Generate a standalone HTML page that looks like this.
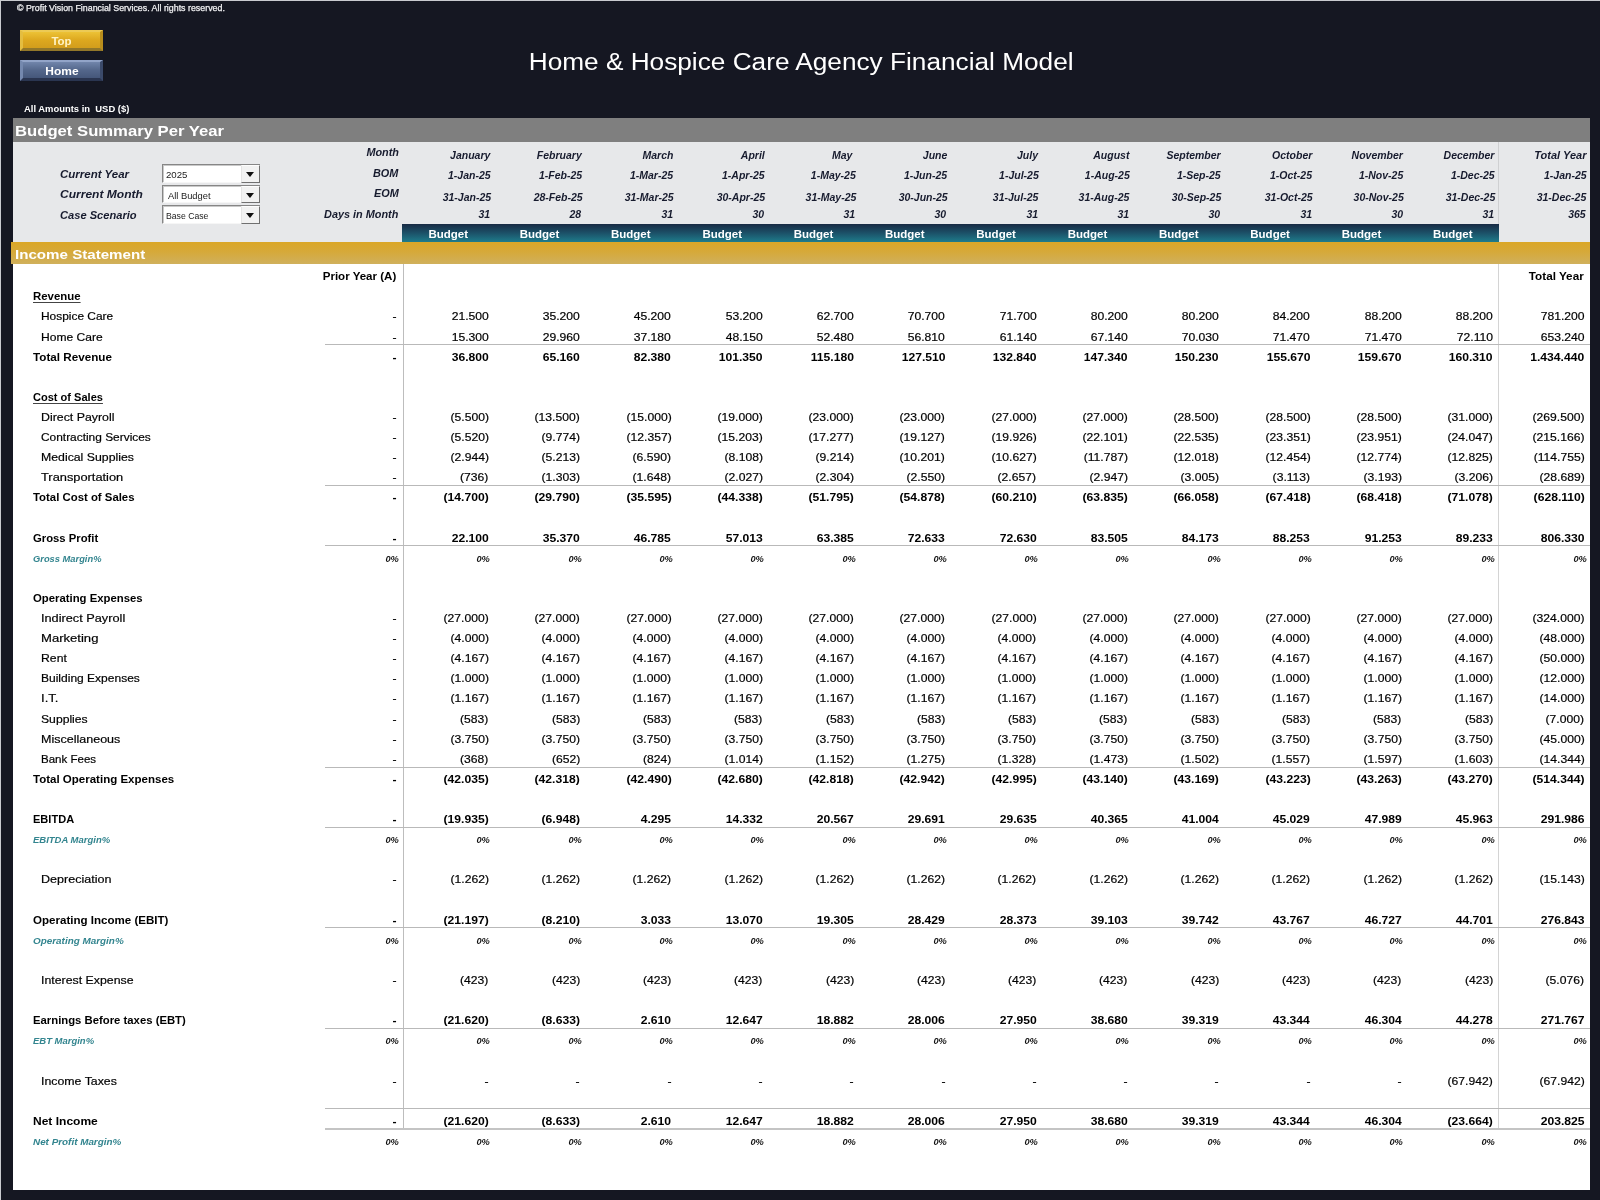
<!DOCTYPE html>
<html lang="en">
<head>
<meta charset="utf-8">
<title>Home &amp; Hospice Care Agency Financial Model</title>
<style>
*{box-sizing:border-box;margin:0;padding:0}
html,body{width:1600px;height:1200px;overflow:hidden;background:#151722}
body{font-family:"Liberation Sans",sans-serif;color:#000}
#page{will-change:transform;position:relative;width:1600px;height:1200px;overflow:hidden;background:#151722}
#page span,#page div{white-space:nowrap}
.edge{position:absolute;left:0;top:0;width:1px;height:1200px;background:#c9cacf}
.edget{position:absolute;left:0;top:0;width:1600px;height:1px;background:#c9cacf}
.copy{position:absolute;left:17px;top:2.8px;-webkit-text-stroke:0.25px #f0f0f2;font-size:8.2px;line-height:11px;color:#f0f0f2;font-weight:normal;transform:scaleX(1.08);transform-origin:0 50%}
.btn{position:absolute;left:20px;width:83px;height:21px;color:#fff;font-weight:bold;font-size:11.5px;line-height:20px;text-align:center;border-style:solid;border-width:2px 3px 3px 3px}
.btn.top{top:30px;background:linear-gradient(#ecc236,#dda81f 50%,#d29d1c);border-color:#ecca55 #b88d1c #927729 #e4bd40;color:#fff3c4}
.btn.home{top:60px;height:20.8px;background:linear-gradient(#7185ab,#54678b 50%,#45577a);border-color:#92a4c8 #3b4a6a #2a3550 #7488ae}
.btn.home span{transform:scaleX(1.04)}
.btn span{display:inline-block;position:relative;top:-1px}
.title{position:absolute;left:1.5px;width:1600px;top:45.4px;text-align:center;color:#fff;font-size:23.3px;line-height:34px}
.title span{display:inline-block;transform:scaleX(1.125)}
.amounts{position:absolute;left:24px;top:101.7px;font-size:9px;line-height:14px;color:#fff;font-weight:bold;transform:scaleX(1.046);transform-origin:0 50%}
.ghead{position:absolute;left:13px;top:118px;width:1577px;height:24px;background:#7f7f7f;color:#fff;font-weight:bold;font-size:15.5px;line-height:26px;padding-left:2px}
.ghead span{display:inline-block;transform:scaleX(1.075);transform-origin:0 50%}
.panel{position:absolute;left:13px;top:142px;width:1577px;height:100px;background:#e7e8ea}
.pline{position:absolute;left:1498px;top:142px;width:1px;height:100px;background:#cfd0d2}
.h{position:absolute;margin-top:0.8px;font-size:10px;line-height:14.4px;font-weight:bold;font-style:italic;color:#171b2e;transform:scaleX(1.05);transform-origin:100% 50%}
.h.hq{transform:scaleX(1.087)}
.h.ty{transform:scaleX(1.10)}
.pl{position:absolute;left:60px;font-size:11.5px;line-height:16px;font-weight:bold;font-style:italic;color:#171b2e;transform:scaleX(1.015);transform-origin:0 50%}
.dd{position:absolute;left:162px;width:98px;height:18.5px;background:#fff;border-top:1px solid #868686;border-left:1px solid #868686;border-bottom:1px solid #f6f6f6;box-shadow:inset 1px 1px 0 #c9c9c9}
.dd .v{position:absolute;left:3px;top:4px;font-size:9.4px;line-height:12px;color:#222;transform:scaleX(1.03);transform-origin:0 50%}
.dd .a{position:absolute;right:0;top:0;width:19px;height:17.5px;background:#f2f2f2;border:1px solid;border-color:#fdfdfd #707070 #707070 #e4e4e4}
.dd .a:after{content:"";position:absolute;left:3.5px;top:6px;border-left:4.7px solid transparent;border-right:4.7px solid transparent;border-top:5px solid #111}
.budbar{position:absolute;left:402px;top:224px;width:1096.5px;height:18px;background:linear-gradient(#182a44,#1c5168 50%,#1e7c8b)}
.bud{position:absolute;top:0;width:90px;text-align:center;color:#fff;font-weight:bold;font-size:11.5px;line-height:20.6px}
.gold{position:absolute;left:11px;top:242px;width:1579px;height:21.5px;background:linear-gradient(#dba727,#d6a93a 45%,#d0b05c);color:#fff;font-weight:bold;font-size:13.5px;line-height:25.6px;padding-left:4px}
.gold span{display:inline-block;transform:scaleX(1.12);transform-origin:0 50%}
.sheet{position:absolute;left:13px;top:263.5px;width:1577px;height:926px;background:#fff}
.vl{position:absolute;width:1px;top:264px;height:864px}
.hl{position:absolute;left:325px;width:1265px}
.row{position:absolute;left:0;width:1600px;height:20.1px}
.row span{position:absolute;top:7px;font-size:10.4px;line-height:14px;color:#000;-webkit-text-stroke:0.18px #000}
.row .lab{transform:scaleX(1.15);transform-origin:0 50%}
.row .lab.b{transform:scaleX(1.116)}
.row .n{transform:scaleX(1.168);transform-origin:100% 50%}
.row .b{font-weight:bold;color:#000;-webkit-text-stroke:0}
.row .u{text-decoration:underline;text-underline-offset:1.5px;text-decoration-thickness:1px;text-decoration-color:#444}
.row .lab.m{font-size:8.4px;font-weight:bold;font-style:italic;color:#33858f;-webkit-text-stroke:0;top:7px;transform:scaleX(1.155)}
.row .n.p{font-size:8.2px;font-weight:bold;font-style:italic;color:#111;-webkit-text-stroke:0;top:7.8px;transform:scaleX(1.13)}
</style>
</head>
<body>
<div id="page">
<div class="edge"></div>
<div class="edget"></div>
<div class="copy">© Profit Vision Financial Services. All rights reserved.</div>
<div class="btn top"><span>Top</span></div>
<div class="btn home"><span>Home</span></div>
<div class="title"><span>Home &amp; Hospice Care Agency Financial Model</span></div>
<div class="amounts">All Amounts in&nbsp; USD ($)</div>
<div class="ghead"><span>Budget Summary Per Year</span></div>
<div class="panel"></div>
<div class="pline"></div>
<span class="pl" style="top:165.5px;transform:scaleX(1.0)">Current Year</span>
<span class="pl" style="top:186.3px;transform:scaleX(1.047)">Current Month</span>
<span class="pl" style="top:206.8px;transform:scaleX(0.967)">Case Scenario</span>
<div class="dd" style="top:164px"><span class="v">2025</span><span class="a"></span></div>
<div class="dd" style="top:184.5px"><span class="v" style="left:5px;transform:scaleX(0.995)">All Budget</span><span class="a"></span></div>
<div class="dd" style="top:205px"><span class="v" style="left:2.5px;transform:scaleX(0.925)">Base Case</span><span class="a"></span></div>
<span class="h" style="right:1109.4px;top:148.4px">January</span>
<span class="h" style="right:1109.1px;top:168.0px">1-Jan-25</span>
<span class="h" style="right:1109.1px;top:190.0px">31-Jan-25</span>
<span class="h" style="right:1109.7px;top:207.0px">31</span>
<span class="h" style="right:1018.1px;top:148.4px">February</span>
<span class="h" style="right:1017.8px;top:168.0px">1-Feb-25</span>
<span class="h" style="right:1017.8px;top:190.0px">28-Feb-25</span>
<span class="h" style="right:1018.4px;top:207.0px">28</span>
<span class="h" style="right:926.9px;top:148.4px">March</span>
<span class="h" style="right:926.6px;top:168.0px">1-Mar-25</span>
<span class="h" style="right:926.6px;top:190.0px">31-Mar-25</span>
<span class="h" style="right:927.2px;top:207.0px">31</span>
<span class="h" style="right:835.6px;top:148.4px">April</span>
<span class="h" style="right:835.3px;top:168.0px">1-Apr-25</span>
<span class="h" style="right:835.3px;top:190.0px">30-Apr-25</span>
<span class="h" style="right:835.9px;top:207.0px">30</span>
<span class="h" style="right:747.3px;top:148.4px">May</span>
<span class="h" style="right:744.0px;top:168.0px">1-May-25</span>
<span class="h" style="right:744.0px;top:190.0px">31-May-25</span>
<span class="h" style="right:744.6px;top:207.0px">31</span>
<span class="h" style="right:653.0px;top:148.4px">June</span>
<span class="h" style="right:652.8px;top:168.0px">1-Jun-25</span>
<span class="h" style="right:652.8px;top:190.0px">30-Jun-25</span>
<span class="h" style="right:653.4px;top:207.0px">30</span>
<span class="h" style="right:561.8px;top:148.4px">July</span>
<span class="h" style="right:561.5px;top:168.0px">1-Jul-25</span>
<span class="h" style="right:561.5px;top:190.0px">31-Jul-25</span>
<span class="h" style="right:562.1px;top:207.0px">31</span>
<span class="h" style="right:470.5px;top:148.4px">August</span>
<span class="h" style="right:470.2px;top:168.0px">1-Aug-25</span>
<span class="h" style="right:470.2px;top:190.0px">31-Aug-25</span>
<span class="h" style="right:470.8px;top:207.0px">31</span>
<span class="h" style="right:379.2px;top:148.4px">September</span>
<span class="h" style="right:378.9px;top:168.0px">1-Sep-25</span>
<span class="h" style="right:378.9px;top:190.0px">30-Sep-25</span>
<span class="h" style="right:379.5px;top:207.0px">30</span>
<span class="h" style="right:288.0px;top:148.4px">October</span>
<span class="h" style="right:287.7px;top:168.0px">1-Oct-25</span>
<span class="h" style="right:287.7px;top:190.0px">31-Oct-25</span>
<span class="h" style="right:288.3px;top:207.0px">31</span>
<span class="h" style="right:196.7px;top:148.4px">November</span>
<span class="h" style="right:196.4px;top:168.0px">1-Nov-25</span>
<span class="h" style="right:196.4px;top:190.0px">30-Nov-25</span>
<span class="h" style="right:197.0px;top:207.0px">30</span>
<span class="h" style="right:105.4px;top:148.4px">December</span>
<span class="h" style="right:105.1px;top:168.0px">1-Dec-25</span>
<span class="h" style="right:105.1px;top:190.0px">31-Dec-25</span>
<span class="h" style="right:105.7px;top:207.0px">31</span>
<span class="h ty" style="right:13.7px;top:148.4px">Total Year</span>
<span class="h" style="right:13.7px;top:168.0px">1-Jan-25</span>
<span class="h" style="right:13.7px;top:190.0px">31-Dec-25</span>
<span class="h" style="right:14.0px;top:207.0px">365</span>
<span class="h hq" style="right:1201.3px;top:145.4px">Month</span>
<span class="h hq" style="right:1201.3px;top:166.0px">BOM</span>
<span class="h hq" style="right:1201.3px;top:186.0px">EOM</span>
<span class="h hq" style="right:1201.3px;top:207.0px">Days in Month</span>
<div class="budbar">
</div>
<div class="budwrap" style="position:absolute;left:0;top:224px;width:1600px;height:18px">
<span class="bud" style="left:403.2px">Budget</span>
<span class="bud" style="left:494.5px">Budget</span>
<span class="bud" style="left:585.8px">Budget</span>
<span class="bud" style="left:677.2px">Budget</span>
<span class="bud" style="left:768.5px">Budget</span>
<span class="bud" style="left:859.8px">Budget</span>
<span class="bud" style="left:951.1px">Budget</span>
<span class="bud" style="left:1042.5px">Budget</span>
<span class="bud" style="left:1133.8px">Budget</span>
<span class="bud" style="left:1225.1px">Budget</span>
<span class="bud" style="left:1316.5px">Budget</span>
<span class="bud" style="left:1407.8px">Budget</span>
</div>
<div class="gold"><span>Income Statement</span></div>
<div class="sheet"></div>
<div class="vl" style="left:403px;background:#bdbdbd"></div>
<div class="vl" style="left:1498px;background:#d4d4d4"></div>
<div class="row hdr0" style="top:263px">
<span class="n b" style="right:1203.5px;transform:scaleX(1.11)">Prior Year (A)</span>
<span class="n b" style="right:16.0px;transform:scaleX(1.127)">Total Year</span>
</div>
<div class="row uhead" style="top:283px">
<span class="lab b u" style="left:33.0px;transform:scaleX(1.0986)">Revenue</span>
</div>
<div class="row item" style="top:303px">
<span class="lab" style="left:41.1px;transform:scaleX(1.1468)">Hospice Care</span>
<span class="n" style="right:1203.7px">-</span>
<span class="n" style="right:1111.4px">21.500</span>
<span class="n" style="right:1020.1px">35.200</span>
<span class="n" style="right:928.8px">45.200</span>
<span class="n" style="right:837.5px">53.200</span>
<span class="n" style="right:746.2px">62.700</span>
<span class="n" style="right:654.9px">70.700</span>
<span class="n" style="right:563.7px">71.700</span>
<span class="n" style="right:472.4px">80.200</span>
<span class="n" style="right:381.1px">80.200</span>
<span class="n" style="right:289.8px">84.200</span>
<span class="n" style="right:198.5px">88.200</span>
<span class="n" style="right:107.2px">88.200</span>
<span class="n" style="right:15.6px">781.200</span>
</div>
<div class="row item" style="top:324px">
<span class="lab" style="left:41.1px;transform:scaleX(1.1605)">Home Care</span>
<span class="n" style="right:1203.7px">-</span>
<span class="n" style="right:1111.4px">15.300</span>
<span class="n" style="right:1020.1px">29.960</span>
<span class="n" style="right:928.8px">37.180</span>
<span class="n" style="right:837.5px">48.150</span>
<span class="n" style="right:746.2px">52.480</span>
<span class="n" style="right:654.9px">56.810</span>
<span class="n" style="right:563.7px">61.140</span>
<span class="n" style="right:472.4px">67.140</span>
<span class="n" style="right:381.1px">70.030</span>
<span class="n" style="right:289.8px">71.470</span>
<span class="n" style="right:198.5px">71.470</span>
<span class="n" style="right:107.2px">72.110</span>
<span class="n" style="right:15.6px">653.240</span>
</div>
<div class="row total" style="top:344px">
<span class="lab b" style="left:33.0px;transform:scaleX(1.1232)">Total Revenue</span>
<span class="n b" style="right:1203.7px">-</span>
<span class="n b" style="right:1111.4px">36.800</span>
<span class="n b" style="right:1020.1px">65.160</span>
<span class="n b" style="right:928.8px">82.380</span>
<span class="n b" style="right:837.5px">101.350</span>
<span class="n b" style="right:746.2px">115.180</span>
<span class="n b" style="right:654.9px">127.510</span>
<span class="n b" style="right:563.7px">132.840</span>
<span class="n b" style="right:472.4px">147.340</span>
<span class="n b" style="right:381.1px">150.230</span>
<span class="n b" style="right:289.8px">155.670</span>
<span class="n b" style="right:198.5px">159.670</span>
<span class="n b" style="right:107.2px">160.310</span>
<span class="n b" style="right:15.6px">1.434.440</span>
</div>
<div class="row uhead" style="top:384px">
<span class="lab b u" style="left:33.0px;transform:scaleX(1.0625)">Cost of Sales</span>
</div>
<div class="row item" style="top:404px">
<span class="lab" style="left:41.1px;transform:scaleX(1.1878)">Direct Payroll</span>
<span class="n" style="right:1203.7px">-</span>
<span class="n" style="right:1111.4px">(5.500)</span>
<span class="n" style="right:1020.1px">(13.500)</span>
<span class="n" style="right:928.8px">(15.000)</span>
<span class="n" style="right:837.5px">(19.000)</span>
<span class="n" style="right:746.2px">(23.000)</span>
<span class="n" style="right:654.9px">(23.000)</span>
<span class="n" style="right:563.7px">(27.000)</span>
<span class="n" style="right:472.4px">(27.000)</span>
<span class="n" style="right:381.1px">(28.500)</span>
<span class="n" style="right:289.8px">(28.500)</span>
<span class="n" style="right:198.5px">(28.500)</span>
<span class="n" style="right:107.2px">(31.000)</span>
<span class="n" style="right:15.6px">(269.500)</span>
</div>
<div class="row item" style="top:424px">
<span class="lab" style="left:41.1px;transform:scaleX(1.1453)">Contracting Services</span>
<span class="n" style="right:1203.7px">-</span>
<span class="n" style="right:1111.4px">(5.520)</span>
<span class="n" style="right:1020.1px">(9.774)</span>
<span class="n" style="right:928.8px">(12.357)</span>
<span class="n" style="right:837.5px">(15.203)</span>
<span class="n" style="right:746.2px">(17.277)</span>
<span class="n" style="right:654.9px">(19.127)</span>
<span class="n" style="right:563.7px">(19.926)</span>
<span class="n" style="right:472.4px">(22.101)</span>
<span class="n" style="right:381.1px">(22.535)</span>
<span class="n" style="right:289.8px">(23.351)</span>
<span class="n" style="right:198.5px">(23.951)</span>
<span class="n" style="right:107.2px">(24.047)</span>
<span class="n" style="right:15.6px">(215.166)</span>
</div>
<div class="row item" style="top:444px">
<span class="lab" style="left:41.1px;transform:scaleX(1.1829)">Medical Supplies</span>
<span class="n" style="right:1203.7px">-</span>
<span class="n" style="right:1111.4px">(2.944)</span>
<span class="n" style="right:1020.1px">(5.213)</span>
<span class="n" style="right:928.8px">(6.590)</span>
<span class="n" style="right:837.5px">(8.108)</span>
<span class="n" style="right:746.2px">(9.214)</span>
<span class="n" style="right:654.9px">(10.201)</span>
<span class="n" style="right:563.7px">(10.627)</span>
<span class="n" style="right:472.4px">(11.787)</span>
<span class="n" style="right:381.1px">(12.018)</span>
<span class="n" style="right:289.8px">(12.454)</span>
<span class="n" style="right:198.5px">(12.774)</span>
<span class="n" style="right:107.2px">(12.825)</span>
<span class="n" style="right:15.6px">(114.755)</span>
</div>
<div class="row item" style="top:464px">
<span class="lab" style="left:41.1px;transform:scaleX(1.2340)">Transportation</span>
<span class="n" style="right:1203.7px">-</span>
<span class="n" style="right:1111.4px">(736)</span>
<span class="n" style="right:1020.1px">(1.303)</span>
<span class="n" style="right:928.8px">(1.648)</span>
<span class="n" style="right:837.5px">(2.027)</span>
<span class="n" style="right:746.2px">(2.304)</span>
<span class="n" style="right:654.9px">(2.550)</span>
<span class="n" style="right:563.7px">(2.657)</span>
<span class="n" style="right:472.4px">(2.947)</span>
<span class="n" style="right:381.1px">(3.005)</span>
<span class="n" style="right:289.8px">(3.113)</span>
<span class="n" style="right:198.5px">(3.193)</span>
<span class="n" style="right:107.2px">(3.206)</span>
<span class="n" style="right:15.6px">(28.689)</span>
</div>
<div class="row total" style="top:484px">
<span class="lab b" style="left:33.0px;transform:scaleX(1.0943)">Total Cost of Sales</span>
<span class="n b" style="right:1203.7px">-</span>
<span class="n b" style="right:1111.4px">(14.700)</span>
<span class="n b" style="right:1020.1px">(29.790)</span>
<span class="n b" style="right:928.8px">(35.595)</span>
<span class="n b" style="right:837.5px">(44.338)</span>
<span class="n b" style="right:746.2px">(51.795)</span>
<span class="n b" style="right:654.9px">(54.878)</span>
<span class="n b" style="right:563.7px">(60.210)</span>
<span class="n b" style="right:472.4px">(63.835)</span>
<span class="n b" style="right:381.1px">(66.058)</span>
<span class="n b" style="right:289.8px">(67.418)</span>
<span class="n b" style="right:198.5px">(68.418)</span>
<span class="n b" style="right:107.2px">(71.078)</span>
<span class="n b" style="right:15.6px">(628.110)</span>
</div>
<div class="row total" style="top:525px">
<span class="lab b" style="left:33.0px;transform:scaleX(1.0869)">Gross Profit</span>
<span class="n b" style="right:1203.7px">-</span>
<span class="n b" style="right:1111.4px">22.100</span>
<span class="n b" style="right:1020.1px">35.370</span>
<span class="n b" style="right:928.8px">46.785</span>
<span class="n b" style="right:837.5px">57.013</span>
<span class="n b" style="right:746.2px">63.385</span>
<span class="n b" style="right:654.9px">72.633</span>
<span class="n b" style="right:563.7px">72.630</span>
<span class="n b" style="right:472.4px">83.505</span>
<span class="n b" style="right:381.1px">84.173</span>
<span class="n b" style="right:289.8px">88.253</span>
<span class="n b" style="right:198.5px">91.253</span>
<span class="n b" style="right:107.2px">89.233</span>
<span class="n b" style="right:15.6px">806.330</span>
</div>
<div class="row margin" style="top:545px">
<span class="lab m" style="left:33.0px;transform:scaleX(1.1143)">Gross Margin%</span>
<span class="n p" style="right:1201.0px">0%</span>
<span class="n p" style="right:1110.0px">0%</span>
<span class="n p" style="right:1018.6px">0%</span>
<span class="n p" style="right:927.3px">0%</span>
<span class="n p" style="right:836.0px">0%</span>
<span class="n p" style="right:744.6px">0%</span>
<span class="n p" style="right:653.3px">0%</span>
<span class="n p" style="right:562.0px">0%</span>
<span class="n p" style="right:470.7px">0%</span>
<span class="n p" style="right:379.3px">0%</span>
<span class="n p" style="right:288.0px">0%</span>
<span class="n p" style="right:196.7px">0%</span>
<span class="n p" style="right:105.3px">0%</span>
<span class="n p" style="right:13.5px">0%</span>
</div>
<div class="row head" style="top:585px">
<span class="lab b" style="left:33.0px;transform:scaleX(1.0911)">Operating Expenses</span>
</div>
<div class="row item" style="top:605px">
<span class="lab" style="left:41.1px;transform:scaleX(1.2254)">Indirect Payroll</span>
<span class="n" style="right:1203.7px">-</span>
<span class="n" style="right:1111.4px">(27.000)</span>
<span class="n" style="right:1020.1px">(27.000)</span>
<span class="n" style="right:928.8px">(27.000)</span>
<span class="n" style="right:837.5px">(27.000)</span>
<span class="n" style="right:746.2px">(27.000)</span>
<span class="n" style="right:654.9px">(27.000)</span>
<span class="n" style="right:563.7px">(27.000)</span>
<span class="n" style="right:472.4px">(27.000)</span>
<span class="n" style="right:381.1px">(27.000)</span>
<span class="n" style="right:289.8px">(27.000)</span>
<span class="n" style="right:198.5px">(27.000)</span>
<span class="n" style="right:107.2px">(27.000)</span>
<span class="n" style="right:15.6px">(324.000)</span>
</div>
<div class="row item" style="top:625px">
<span class="lab" style="left:41.1px;transform:scaleX(1.2582)">Marketing</span>
<span class="n" style="right:1203.7px">-</span>
<span class="n" style="right:1111.4px">(4.000)</span>
<span class="n" style="right:1020.1px">(4.000)</span>
<span class="n" style="right:928.8px">(4.000)</span>
<span class="n" style="right:837.5px">(4.000)</span>
<span class="n" style="right:746.2px">(4.000)</span>
<span class="n" style="right:654.9px">(4.000)</span>
<span class="n" style="right:563.7px">(4.000)</span>
<span class="n" style="right:472.4px">(4.000)</span>
<span class="n" style="right:381.1px">(4.000)</span>
<span class="n" style="right:289.8px">(4.000)</span>
<span class="n" style="right:198.5px">(4.000)</span>
<span class="n" style="right:107.2px">(4.000)</span>
<span class="n" style="right:15.6px">(48.000)</span>
</div>
<div class="row item" style="top:645px">
<span class="lab" style="left:41.1px;transform:scaleX(1.1764)">Rent</span>
<span class="n" style="right:1203.7px">-</span>
<span class="n" style="right:1111.4px">(4.167)</span>
<span class="n" style="right:1020.1px">(4.167)</span>
<span class="n" style="right:928.8px">(4.167)</span>
<span class="n" style="right:837.5px">(4.167)</span>
<span class="n" style="right:746.2px">(4.167)</span>
<span class="n" style="right:654.9px">(4.167)</span>
<span class="n" style="right:563.7px">(4.167)</span>
<span class="n" style="right:472.4px">(4.167)</span>
<span class="n" style="right:381.1px">(4.167)</span>
<span class="n" style="right:289.8px">(4.167)</span>
<span class="n" style="right:198.5px">(4.167)</span>
<span class="n" style="right:107.2px">(4.167)</span>
<span class="n" style="right:15.6px">(50.000)</span>
</div>
<div class="row item" style="top:665px">
<span class="lab" style="left:41.1px;transform:scaleX(1.1565)">Building Expenses</span>
<span class="n" style="right:1203.7px">-</span>
<span class="n" style="right:1111.4px">(1.000)</span>
<span class="n" style="right:1020.1px">(1.000)</span>
<span class="n" style="right:928.8px">(1.000)</span>
<span class="n" style="right:837.5px">(1.000)</span>
<span class="n" style="right:746.2px">(1.000)</span>
<span class="n" style="right:654.9px">(1.000)</span>
<span class="n" style="right:563.7px">(1.000)</span>
<span class="n" style="right:472.4px">(1.000)</span>
<span class="n" style="right:381.1px">(1.000)</span>
<span class="n" style="right:289.8px">(1.000)</span>
<span class="n" style="right:198.5px">(1.000)</span>
<span class="n" style="right:107.2px">(1.000)</span>
<span class="n" style="right:15.6px">(12.000)</span>
</div>
<div class="row item" style="top:685px">
<span class="lab" style="left:41.1px;transform:scaleX(1.2600)">I.T.</span>
<span class="n" style="right:1203.7px">-</span>
<span class="n" style="right:1111.4px">(1.167)</span>
<span class="n" style="right:1020.1px">(1.167)</span>
<span class="n" style="right:928.8px">(1.167)</span>
<span class="n" style="right:837.5px">(1.167)</span>
<span class="n" style="right:746.2px">(1.167)</span>
<span class="n" style="right:654.9px">(1.167)</span>
<span class="n" style="right:563.7px">(1.167)</span>
<span class="n" style="right:472.4px">(1.167)</span>
<span class="n" style="right:381.1px">(1.167)</span>
<span class="n" style="right:289.8px">(1.167)</span>
<span class="n" style="right:198.5px">(1.167)</span>
<span class="n" style="right:107.2px">(1.167)</span>
<span class="n" style="right:15.6px">(14.000)</span>
</div>
<div class="row item" style="top:706px">
<span class="lab" style="left:41.1px;transform:scaleX(1.1709)">Supplies</span>
<span class="n" style="right:1203.7px">-</span>
<span class="n" style="right:1111.4px">(583)</span>
<span class="n" style="right:1020.1px">(583)</span>
<span class="n" style="right:928.8px">(583)</span>
<span class="n" style="right:837.5px">(583)</span>
<span class="n" style="right:746.2px">(583)</span>
<span class="n" style="right:654.9px">(583)</span>
<span class="n" style="right:563.7px">(583)</span>
<span class="n" style="right:472.4px">(583)</span>
<span class="n" style="right:381.1px">(583)</span>
<span class="n" style="right:289.8px">(583)</span>
<span class="n" style="right:198.5px">(583)</span>
<span class="n" style="right:107.2px">(583)</span>
<span class="n" style="right:15.6px">(7.000)</span>
</div>
<div class="row item" style="top:726px">
<span class="lab" style="left:41.1px;transform:scaleX(1.2052)">Miscellaneous</span>
<span class="n" style="right:1203.7px">-</span>
<span class="n" style="right:1111.4px">(3.750)</span>
<span class="n" style="right:1020.1px">(3.750)</span>
<span class="n" style="right:928.8px">(3.750)</span>
<span class="n" style="right:837.5px">(3.750)</span>
<span class="n" style="right:746.2px">(3.750)</span>
<span class="n" style="right:654.9px">(3.750)</span>
<span class="n" style="right:563.7px">(3.750)</span>
<span class="n" style="right:472.4px">(3.750)</span>
<span class="n" style="right:381.1px">(3.750)</span>
<span class="n" style="right:289.8px">(3.750)</span>
<span class="n" style="right:198.5px">(3.750)</span>
<span class="n" style="right:107.2px">(3.750)</span>
<span class="n" style="right:15.6px">(45.000)</span>
</div>
<div class="row item" style="top:746px">
<span class="lab" style="left:41.1px;transform:scaleX(1.1100)">Bank Fees</span>
<span class="n" style="right:1203.7px">-</span>
<span class="n" style="right:1111.4px">(368)</span>
<span class="n" style="right:1020.1px">(652)</span>
<span class="n" style="right:928.8px">(824)</span>
<span class="n" style="right:837.5px">(1.014)</span>
<span class="n" style="right:746.2px">(1.152)</span>
<span class="n" style="right:654.9px">(1.275)</span>
<span class="n" style="right:563.7px">(1.328)</span>
<span class="n" style="right:472.4px">(1.473)</span>
<span class="n" style="right:381.1px">(1.502)</span>
<span class="n" style="right:289.8px">(1.557)</span>
<span class="n" style="right:198.5px">(1.597)</span>
<span class="n" style="right:107.2px">(1.603)</span>
<span class="n" style="right:15.6px">(14.344)</span>
</div>
<div class="row total" style="top:766px">
<span class="lab b" style="left:33.0px;transform:scaleX(1.1081)">Total Operating Expenses</span>
<span class="n b" style="right:1203.7px">-</span>
<span class="n b" style="right:1111.4px">(42.035)</span>
<span class="n b" style="right:1020.1px">(42.318)</span>
<span class="n b" style="right:928.8px">(42.490)</span>
<span class="n b" style="right:837.5px">(42.680)</span>
<span class="n b" style="right:746.2px">(42.818)</span>
<span class="n b" style="right:654.9px">(42.942)</span>
<span class="n b" style="right:563.7px">(42.995)</span>
<span class="n b" style="right:472.4px">(43.140)</span>
<span class="n b" style="right:381.1px">(43.169)</span>
<span class="n b" style="right:289.8px">(43.223)</span>
<span class="n b" style="right:198.5px">(43.263)</span>
<span class="n b" style="right:107.2px">(43.270)</span>
<span class="n b" style="right:15.6px">(514.344)</span>
</div>
<div class="row total" style="top:806px">
<span class="lab b" style="left:33.0px;transform:scaleX(1.0629)">EBITDA</span>
<span class="n b" style="right:1203.7px">-</span>
<span class="n b" style="right:1111.4px">(19.935)</span>
<span class="n b" style="right:1020.1px">(6.948)</span>
<span class="n b" style="right:928.8px">4.295</span>
<span class="n b" style="right:837.5px">14.332</span>
<span class="n b" style="right:746.2px">20.567</span>
<span class="n b" style="right:654.9px">29.691</span>
<span class="n b" style="right:563.7px">29.635</span>
<span class="n b" style="right:472.4px">40.365</span>
<span class="n b" style="right:381.1px">41.004</span>
<span class="n b" style="right:289.8px">45.029</span>
<span class="n b" style="right:198.5px">47.989</span>
<span class="n b" style="right:107.2px">45.963</span>
<span class="n b" style="right:15.6px">291.986</span>
</div>
<div class="row margin" style="top:826px">
<span class="lab m" style="left:33.0px;transform:scaleX(1.1328)">EBITDA Margin%</span>
<span class="n p" style="right:1201.0px">0%</span>
<span class="n p" style="right:1110.0px">0%</span>
<span class="n p" style="right:1018.6px">0%</span>
<span class="n p" style="right:927.3px">0%</span>
<span class="n p" style="right:836.0px">0%</span>
<span class="n p" style="right:744.6px">0%</span>
<span class="n p" style="right:653.3px">0%</span>
<span class="n p" style="right:562.0px">0%</span>
<span class="n p" style="right:470.7px">0%</span>
<span class="n p" style="right:379.3px">0%</span>
<span class="n p" style="right:288.0px">0%</span>
<span class="n p" style="right:196.7px">0%</span>
<span class="n p" style="right:105.3px">0%</span>
<span class="n p" style="right:13.5px">0%</span>
</div>
<div class="row item" style="top:866px">
<span class="lab" style="left:41.1px;transform:scaleX(1.2075)">Depreciation</span>
<span class="n" style="right:1203.7px">-</span>
<span class="n" style="right:1111.4px">(1.262)</span>
<span class="n" style="right:1020.1px">(1.262)</span>
<span class="n" style="right:928.8px">(1.262)</span>
<span class="n" style="right:837.5px">(1.262)</span>
<span class="n" style="right:746.2px">(1.262)</span>
<span class="n" style="right:654.9px">(1.262)</span>
<span class="n" style="right:563.7px">(1.262)</span>
<span class="n" style="right:472.4px">(1.262)</span>
<span class="n" style="right:381.1px">(1.262)</span>
<span class="n" style="right:289.8px">(1.262)</span>
<span class="n" style="right:198.5px">(1.262)</span>
<span class="n" style="right:107.2px">(1.262)</span>
<span class="n" style="right:15.6px">(15.143)</span>
</div>
<div class="row total" style="top:907px">
<span class="lab b" style="left:33.0px;transform:scaleX(1.1119)">Operating Income (EBIT)</span>
<span class="n b" style="right:1203.7px">-</span>
<span class="n b" style="right:1111.4px">(21.197)</span>
<span class="n b" style="right:1020.1px">(8.210)</span>
<span class="n b" style="right:928.8px">3.033</span>
<span class="n b" style="right:837.5px">13.070</span>
<span class="n b" style="right:746.2px">19.305</span>
<span class="n b" style="right:654.9px">28.429</span>
<span class="n b" style="right:563.7px">28.373</span>
<span class="n b" style="right:472.4px">39.103</span>
<span class="n b" style="right:381.1px">39.742</span>
<span class="n b" style="right:289.8px">43.767</span>
<span class="n b" style="right:198.5px">46.727</span>
<span class="n b" style="right:107.2px">44.701</span>
<span class="n b" style="right:15.6px">276.843</span>
</div>
<div class="row margin" style="top:927px">
<span class="lab m" style="left:33.0px;transform:scaleX(1.1813)">Operating Margin%</span>
<span class="n p" style="right:1201.0px">0%</span>
<span class="n p" style="right:1110.0px">0%</span>
<span class="n p" style="right:1018.6px">0%</span>
<span class="n p" style="right:927.3px">0%</span>
<span class="n p" style="right:836.0px">0%</span>
<span class="n p" style="right:744.6px">0%</span>
<span class="n p" style="right:653.3px">0%</span>
<span class="n p" style="right:562.0px">0%</span>
<span class="n p" style="right:470.7px">0%</span>
<span class="n p" style="right:379.3px">0%</span>
<span class="n p" style="right:288.0px">0%</span>
<span class="n p" style="right:196.7px">0%</span>
<span class="n p" style="right:105.3px">0%</span>
<span class="n p" style="right:13.5px">0%</span>
</div>
<div class="row item" style="top:967px">
<span class="lab" style="left:41.1px;transform:scaleX(1.1866)">Interest Expense</span>
<span class="n" style="right:1203.7px">-</span>
<span class="n" style="right:1111.4px">(423)</span>
<span class="n" style="right:1020.1px">(423)</span>
<span class="n" style="right:928.8px">(423)</span>
<span class="n" style="right:837.5px">(423)</span>
<span class="n" style="right:746.2px">(423)</span>
<span class="n" style="right:654.9px">(423)</span>
<span class="n" style="right:563.7px">(423)</span>
<span class="n" style="right:472.4px">(423)</span>
<span class="n" style="right:381.1px">(423)</span>
<span class="n" style="right:289.8px">(423)</span>
<span class="n" style="right:198.5px">(423)</span>
<span class="n" style="right:107.2px">(423)</span>
<span class="n" style="right:15.6px">(5.076)</span>
</div>
<div class="row total" style="top:1007px">
<span class="lab b" style="left:33.0px;transform:scaleX(1.0890)">Earnings Before taxes (EBT)</span>
<span class="n b" style="right:1203.7px">-</span>
<span class="n b" style="right:1111.4px">(21.620)</span>
<span class="n b" style="right:1020.1px">(8.633)</span>
<span class="n b" style="right:928.8px">2.610</span>
<span class="n b" style="right:837.5px">12.647</span>
<span class="n b" style="right:746.2px">18.882</span>
<span class="n b" style="right:654.9px">28.006</span>
<span class="n b" style="right:563.7px">27.950</span>
<span class="n b" style="right:472.4px">38.680</span>
<span class="n b" style="right:381.1px">39.319</span>
<span class="n b" style="right:289.8px">43.344</span>
<span class="n b" style="right:198.5px">46.304</span>
<span class="n b" style="right:107.2px">44.278</span>
<span class="n b" style="right:15.6px">271.767</span>
</div>
<div class="row margin" style="top:1027px">
<span class="lab m" style="left:33.0px;transform:scaleX(1.1317)">EBT Margin%</span>
<span class="n p" style="right:1201.0px">0%</span>
<span class="n p" style="right:1110.0px">0%</span>
<span class="n p" style="right:1018.6px">0%</span>
<span class="n p" style="right:927.3px">0%</span>
<span class="n p" style="right:836.0px">0%</span>
<span class="n p" style="right:744.6px">0%</span>
<span class="n p" style="right:653.3px">0%</span>
<span class="n p" style="right:562.0px">0%</span>
<span class="n p" style="right:470.7px">0%</span>
<span class="n p" style="right:379.3px">0%</span>
<span class="n p" style="right:288.0px">0%</span>
<span class="n p" style="right:196.7px">0%</span>
<span class="n p" style="right:105.3px">0%</span>
<span class="n p" style="right:13.5px">0%</span>
</div>
<div class="row item" style="top:1068px">
<span class="lab" style="left:41.1px;transform:scaleX(1.1867)">Income Taxes</span>
<span class="n" style="right:1203.7px">-</span>
<span class="n" style="right:1111.4px">-</span>
<span class="n" style="right:1020.1px">-</span>
<span class="n" style="right:928.8px">-</span>
<span class="n" style="right:837.5px">-</span>
<span class="n" style="right:746.2px">-</span>
<span class="n" style="right:654.9px">-</span>
<span class="n" style="right:563.7px">-</span>
<span class="n" style="right:472.4px">-</span>
<span class="n" style="right:381.1px">-</span>
<span class="n" style="right:289.8px">-</span>
<span class="n" style="right:198.5px">-</span>
<span class="n" style="right:107.2px">(67.942)</span>
<span class="n" style="right:15.6px">(67.942)</span>
</div>
<div class="row total" style="top:1108px">
<span class="lab b" style="left:33.0px;transform:scaleX(1.1572)">Net Income</span>
<span class="n b" style="right:1203.7px">-</span>
<span class="n b" style="right:1111.4px">(21.620)</span>
<span class="n b" style="right:1020.1px">(8.633)</span>
<span class="n b" style="right:928.8px">2.610</span>
<span class="n b" style="right:837.5px">12.647</span>
<span class="n b" style="right:746.2px">18.882</span>
<span class="n b" style="right:654.9px">28.006</span>
<span class="n b" style="right:563.7px">27.950</span>
<span class="n b" style="right:472.4px">38.680</span>
<span class="n b" style="right:381.1px">39.319</span>
<span class="n b" style="right:289.8px">43.344</span>
<span class="n b" style="right:198.5px">46.304</span>
<span class="n b" style="right:107.2px">(23.664)</span>
<span class="n b" style="right:15.6px">203.825</span>
</div>
<div class="row margin" style="top:1128px">
<span class="lab m" style="left:33.0px;transform:scaleX(1.1785)">Net Profit Margin%</span>
<span class="n p" style="right:1201.0px">0%</span>
<span class="n p" style="right:1110.0px">0%</span>
<span class="n p" style="right:1018.6px">0%</span>
<span class="n p" style="right:927.3px">0%</span>
<span class="n p" style="right:836.0px">0%</span>
<span class="n p" style="right:744.6px">0%</span>
<span class="n p" style="right:653.3px">0%</span>
<span class="n p" style="right:562.0px">0%</span>
<span class="n p" style="right:470.7px">0%</span>
<span class="n p" style="right:379.3px">0%</span>
<span class="n p" style="right:288.0px">0%</span>
<span class="n p" style="right:196.7px">0%</span>
<span class="n p" style="right:105.3px">0%</span>
<span class="n p" style="right:13.5px">0%</span>
</div>
<div class="hl" style="top:344px;height:1px;background:#b9b9b9"></div>
<div class="hl" style="top:485px;height:1px;background:#b9b9b9"></div>
<div class="hl" style="top:545px;height:1px;background:#b9b9b9"></div>
<div class="hl" style="top:767px;height:1px;background:#b9b9b9"></div>
<div class="hl" style="top:827px;height:1px;background:#b9b9b9"></div>
<div class="hl" style="top:927px;height:1px;background:#b9b9b9"></div>
<div class="hl" style="top:1028px;height:1px;background:#b9b9b9"></div>
<div class="hl" style="top:1108px;height:1px;background:#b9b9b9"></div>
<div class="hl" style="top:1128px;height:2px;background:#c4c4c4"></div>
</div>
</body>
</html>
